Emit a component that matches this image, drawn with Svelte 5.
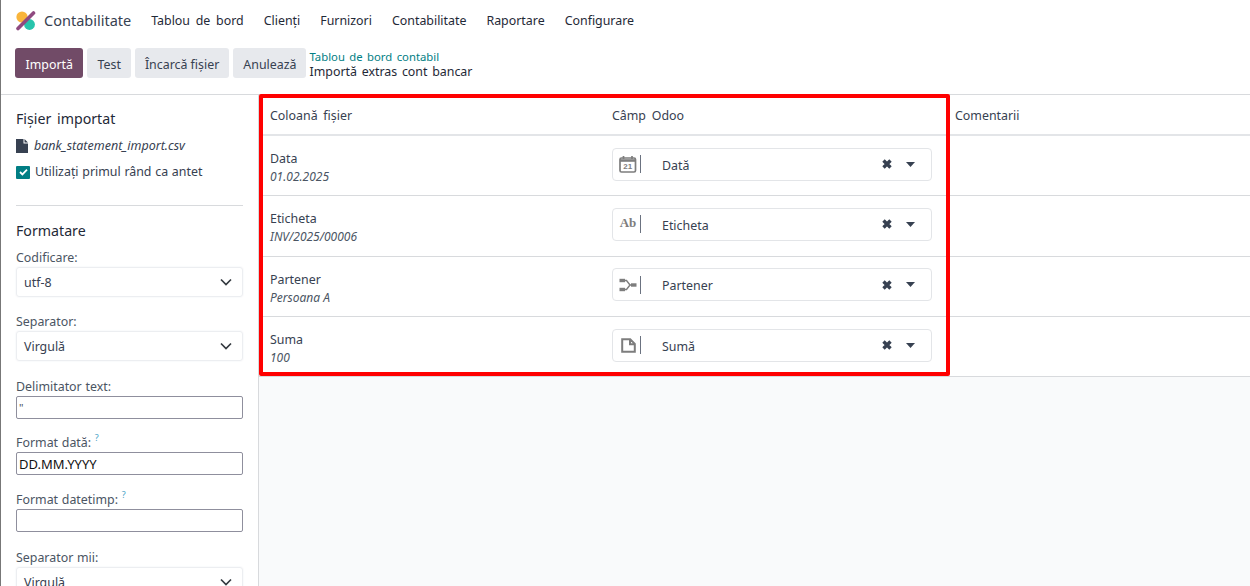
<script lang="ts">
  const menu = ['Tablou de bord', 'Clienți', 'Furnizori', 'Contabilitate', 'Raportare', 'Configurare'];
  const rows = [
    { name: 'Data', sample: '01.02.2025', field: 'Dată', icon: 'date' },
    { name: 'Eticheta', sample: 'INV/2025/00006', field: 'Eticheta', icon: 'text' },
    { name: 'Partener', sample: 'Persoana A', field: 'Partener', icon: 'rel' },
    { name: 'Suma', sample: '100', field: 'Sumă', icon: 'num' }
  ];
</script>

<div class="page">
  <header class="navbar">
    <svg class="logo" width="21" height="21" viewBox="0 0 21 21">
      <circle cx="7" cy="7" r="5.6" fill="#f9b53b" />
      <circle cx="14.5" cy="14.5" r="5.4" fill="#27c4ac" />
      <path d="M3 18.5 18.5 3" stroke="#8f4a80" stroke-width="3.6" stroke-linecap="round" />
    </svg>
    <span class="app-name">Contabilitate</span>
    <nav class="menu">
      {#each menu as item}
        <span>{item}</span>
      {/each}
    </nav>
  </header>

  <div class="control-panel">
    <button class="btn primary">Importă</button>
    <button class="btn">Test</button>
    <button class="btn">Încarcă fișier</button>
    <button class="btn">Anulează</button>
    <div class="breadcrumb">
      <span class="crumb-link">Tablou de bord contabil</span>
      <span class="crumb-current">Importă extras cont bancar</span>
    </div>
  </div>

  <div class="content">
    <aside class="sidebar">
      <h4 class="first">Fișier importat</h4>
      <div class="file">
        <svg width="12" height="14" viewBox="0 0 12 14"><path d="M0 0h7.5v4.5H12V14H0zM8.5 0 12 3.5H8.5z" fill="#374151" /></svg>
        <em>bank_statement_import.csv</em>
      </div>
      <div class="check">
        <span class="box">
          <svg width="9" height="8" viewBox="0 0 9 8"><path d="M1 4l2.4 2.4L8 1.6" fill="none" stroke="#fff" stroke-width="1.8" /></svg>
        </span>
        Utilizați primul rând ca antet
      </div>
      <hr />
      <h4>Formatare</h4>

      <label for="enc">Codificare:</label>
      <div id="enc" class="select">utf-8 {@render chevron()}</div>

      <label for="sep">Separator:</label>
      <div id="sep" class="select">Virgulă {@render chevron()}</div>

      <label for="delim" class="wide">Delimitator text:</label>
      <input id="delim" class="text-input muted" value={'"'} readonly />

      <label for="dfmt" class="narrow">Format dată: <sup>?</sup></label>
      <input id="dfmt" class="text-input" value="DD.MM.YYYY" readonly />

      <label for="dtfmt">Format datetimp: <sup>?</sup></label>
      <input id="dtfmt" class="text-input" readonly />

      <label for="thou" class="wide">Separator mii:</label>
      <div id="thou" class="select">Virgulă {@render chevron()}</div>
    </aside>

    <main class="main">
      <div class="table">
        <div class="row head">
          <div class="col-a">Coloană fișier</div>
          <div class="col-b">Câmp Odoo</div>
          <div class="col-c">Comentarii</div>
        </div>
        {#each rows as row}
          <div class="row">
            <div class="col-a">
              <div class="name">{row.name}</div>
              <div class="sample">{row.sample}</div>
            </div>
            <div class="col-b">
              <div class="field">
                <span class="field-icon">
                  {#if row.icon === 'date'}
                    <svg width="18" height="18" viewBox="0 0 18 18">
                      <rect x="1" y="3" width="15.5" height="14" rx="1.5" fill="none" stroke="#7d7d7d" stroke-width="1.7" />
                      <path d="M1 5.5h15.5" stroke="#7d7d7d" stroke-width="2.6" />
                      <path d="M4.5 1v3M13 1v3" stroke="#7d7d7d" stroke-width="1.7" />
                      <text x="8.8" y="14.4" text-anchor="middle" class="cal-num">21</text>
                    </svg>
                  {:else if row.icon === 'text'}
                    <span class="ab">Ab</span>
                  {:else if row.icon === 'rel'}
                    <svg width="18" height="16" viewBox="0 0 18 16">
                      <path d="M5 3.5h2.5L11 8l-3.5 4.5H5M11 8h2" fill="none" stroke="#7d7d7d" stroke-width="1.4" />
                      <rect x="0.5" y="1.8" width="5.5" height="3.4" fill="#7d7d7d" />
                      <rect x="0.5" y="10.8" width="5.5" height="3.4" fill="#7d7d7d" />
                      <rect x="12" y="6.3" width="5.5" height="3.4" fill="#7d7d7d" />
                    </svg>
                  {:else}
                    <svg width="15" height="15" viewBox="0 0 15 15">
                      <path d="M1.2 1.2h8l4.6 4.6v8H1.2zM9 1.2v5h4.8" fill="none" stroke="#7d7d7d" stroke-width="2" />
                    </svg>
                  {/if}
                </span>
                <span class="divider"></span>
                <span class="field-name">{row.field}</span>
                <svg class="clear" width="10" height="10" viewBox="0 0 10 10"><path d="M1.5 1.5l7 7M8.5 1.5l-7 7" stroke="#374151" stroke-width="3.4" /></svg>
                <svg class="caret" width="9" height="5" viewBox="0 0 9 5"><path d="M0 0h9L4.5 5z" fill="#374151" /></svg>
              </div>
            </div>
            <div class="col-c"></div>
          </div>
        {/each}
      </div>
      <div class="highlight"></div>
    </main>
  </div>
</div>

{#snippet chevron()}
  <svg class="chev" width="12" height="8" viewBox="0 0 12 8"><path d="M1 1.5l5 5 5-5" fill="none" stroke="#343a40" stroke-width="1.7" /></svg>
{/snippet}

<style>
  :global(body) {
    margin: 0;
    background: #fff;
  }

  .page {
    width: 1250px;
    height: 586px;
    overflow: hidden;
    box-sizing: border-box;
    border-left: 1px solid #777;
    font-family: "Noto Sans", "Open Sans", sans-serif;
    font-size: 12.4px;
    word-spacing: 2.5px;
    color: #374151;
    display: flex;
    flex-direction: column;
  }

  .navbar {
    height: 40px;
    display: flex;
    align-items: center;
    padding-left: 14px;
    flex: none;
  }

  .app-name {
    font-size: 14.5px;
    margin-left: 8px;
    color: #374151;
  }

  .menu {
    display: flex;
    gap: 20px;
    margin-left: 20px;
    color: #1f2937;
  }

  .control-panel {
    height: 55px;
    box-sizing: border-box;
    padding-top: 8px;
    display: flex;
    align-items: flex-start;
    gap: 4px;
    padding-left: 14px;
    border-bottom: 1px solid #d8dadd;
    flex: none;
  }

  .btn {
    height: 30px;
    border: 0;
    border-radius: 3px;
    padding: 2px 10px 0;
    background: #e7e9ed;
    color: #374151;
    font: inherit;
    word-spacing: 0;
  }

  .btn.primary {
    padding: 2px 10.5px 0;
    background: #714b67;
    color: #fff;
  }

  .breadcrumb {
    display: flex;
    flex-direction: column;
    margin-left: -1px;
    margin-top: 1px;
    line-height: 15px;
    word-spacing: 1.5px;
  }

  .crumb-link {
    color: #017e84;
    font-size: 11.3px;
  }

  .crumb-current {
    color: #1f2937;
  }

  .content {
    flex: 1;
    display: flex;
    min-height: 0;
  }

  .sidebar {
    width: 258px;
    flex: none;
    box-sizing: border-box;
    padding: 0 15px;
    border-right: 1px solid #d8dadd;
    display: flex;
    flex-direction: column;
    word-spacing: 0.5px;
  }

  .sidebar > * {
    flex: none;
  }

  h4 {
    font-size: 14.2px;
    font-weight: 400;
    line-height: 20px;
    margin: 0;
    color: #1f2937;
    word-spacing: 2px;
  }

  h4.first {
    margin-top: 14px;
  }

  .file {
    display: flex;
    align-items: center;
    gap: 6px;
    margin-top: 8px;
    line-height: 18px;
    font-size: 12.5px;
  }

  .check {
    display: flex;
    align-items: center;
    gap: 5px;
    margin-top: 8px;
    line-height: 18px;
  }

  .box {
    width: 14px;
    height: 13px;
    background: #017e84;
    border-radius: 1px;
    display: flex;
    align-items: center;
    justify-content: center;
  }

  hr {
    width: 100%;
    border: 0;
    border-top: 1px solid #d8dadd;
    margin: 24px 0 15px;
  }

  label {
    display: block;
    line-height: 18px;
    margin-top: 16px;
    color: #4b5563;
  }

  label.wide {
    margin-top: 17px;
  }

  label.narrow {
    margin-top: 15px;
  }

  h4 + label {
    margin-top: 8px;
  }

  sup {
    color: #4aa3c7;
    font-size: 9px;
    line-height: 0;
    vertical-align: 6px;
  }

  .select {
    height: 30px;
    box-sizing: border-box;
    border: 1px solid #eceef1;
    border-radius: 3px;
    box-shadow: 0 0 2px #eceef1;
    padding: 0 10px 0 7px;
    display: flex;
    align-items: center;
    justify-content: space-between;
  }

  .text-input {
    display: block;
    width: 100%;
    height: 23px;
    box-sizing: border-box;
    border: 1px solid #8f8f9d;
    border-radius: 2px;
    padding: 0 2px;
    font: inherit;
    font-size: 13px;
    color: #111;
    outline: none;
  }

  .text-input.muted {
    color: #4b5563;
    font-size: 11px;
  }

  .main {
    flex: 1;
    background: #f9fafb;
    position: relative;
    min-width: 0;
  }

  .table {
    background: #fff;
  }

  .row {
    display: grid;
    grid-template-columns: 342px 343px 1fr;
    height: 60.3px;
    box-sizing: border-box;
    border-bottom: 1px solid #d8dadd;
    align-items: center;
    padding-left: 11px;
  }

  .row.head {
    height: 41px;
    padding-top: 2px;
    border-bottom: 2px solid #e3e5e8;
  }

  .name {
    line-height: 18px;
    margin-top: 5px;
  }

  .sample {
    font-style: italic;
    font-size: 12px;
    line-height: 18px;
    color: #4b5563;
    word-spacing: 0;
  }

  .field {
    width: 320px;
    height: 33px;
    box-sizing: border-box;
    margin-bottom: 3px;
    border: 1px solid #e3e5e8;
    border-radius: 4px;
    display: flex;
    align-items: center;
    background: #fff;
  }

  .field-icon {
    width: 20px;
    margin-left: 5px;
    display: flex;
    justify-content: center;
    align-items: center;
    height: 20px;
  }

  .cal-num {
    font-family: "Liberation Sans", sans-serif;
    font-size: 8px;
    font-weight: 700;
    fill: #7d7d7d;
  }

  .ab {
    font-family: "Liberation Serif", serif;
    font-weight: 700;
    font-size: 13px;
    color: #7d7d7d;
    margin-top: -3px;
  }

  .divider {
    width: 1px;
    height: 18px;
    background: #6b7280;
    margin-left: 2px;
  }

  .field-name {
    margin-left: 21px;
    padding-top: 2px;
    flex: 1;
  }

  .clear {
    margin-right: 14px;
  }

  .caret {
    margin-right: 16px;
  }

  .highlight {
    position: absolute;
    left: 0;
    top: -1px;
    width: 691px;
    height: 282px;
    box-sizing: border-box;
    border: 4px solid #ff0000;
    border-radius: 2px;
    pointer-events: none;
  }
</style>
